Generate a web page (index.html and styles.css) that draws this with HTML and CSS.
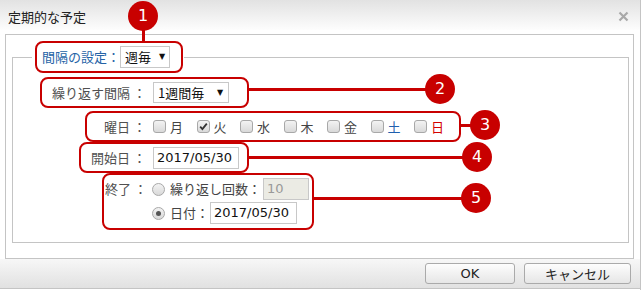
FILE: index.html
```html
<!DOCTYPE html>
<html lang="ja">

<head>
    <meta charset="UTF-8">
    <meta name="viewport" content="width=device-width, initial-scale=1.0">
    <title>定期的な予定</title>
    <link rel="stylesheet" href="styles.css">
</head>

<body>
    <div class="dialog">
        <div class="titlebar">
            <span class="title">定期的な予定</span>
            <span class="close">
                <svg width="11" height="11" viewBox="0 0 11 11">
                    <path d="M1.5 1.5 L9.5 9.5 M9.5 1.5 L1.5 9.5" stroke="#a8a8a8" stroke-width="2.2" fill="none"/>
                </svg>
            </span>
        </div>

        <div class="content">
            <div class="frame">
                <fieldset class="group">
                    <legend class="legend">
                        <div class="mark mark-type">
                            <span class="legend-text">間隔の設定：</span>
                            <span class="select select-type">週毎<i class="arrow">▼</i></span>
                        </div>
                    </legend>

                    <div class="mark mark-interval">
                        <span class="label label-interval">繰り返す間隔 ：</span>
                        <span class="select select-interval">1週間毎<i class="arrow">▼</i></span>
                    </div>

                    <div class="mark mark-days">
                        <span class="label label-days">曜日 ：</span>
                        <div class="days">
                            <span class="day"><span class="check"></span>月</span>
                            <span class="day"><span class="check checked"><svg width="11" height="11" viewBox="0 0 11 11"><path d="M2.2 5.6 L4.4 8 L8.8 2.6" stroke="#333" stroke-width="1.8" fill="none"/></svg></span>火</span>
                            <span class="day"><span class="check"></span>水</span>
                            <span class="day"><span class="check"></span>木</span>
                            <span class="day"><span class="check"></span>金</span>
                            <span class="day day-sat"><span class="check"></span>土</span>
                            <span class="day day-sun"><span class="check"></span>日</span>
                        </div>
                    </div>

                    <div class="mark mark-start">
                        <span class="label label-start">開始日 ：</span>
                        <span class="field field-start">2017/05/30</span>
                    </div>

                    <div class="mark mark-end">
                        <span class="label label-end">終了 ：</span>
                        <div class="options">
                            <div class="option">
                                <span class="radio"></span>
                                <span class="option-text">繰り返し回数：</span>
                                <span class="field field-count">10</span>
                            </div>
                            <div class="option">
                                <span class="radio checked"></span>
                                <span class="option-text">日付：</span>
                                <span class="field field-date">2017/05/30</span>
                            </div>
                        </div>
                    </div>
                </fieldset>
            </div>
        </div>

        <div class="footer">
            <button class="btn btn-ok">OK</button>
            <button class="btn btn-cancel">キャンセル</button>
        </div>

        <!-- 注釈 -->
        <div class="lead lead-1"></div>
        <div class="lead lead-2"></div>
        <div class="lead lead-3"></div>
        <div class="lead lead-4"></div>
        <div class="lead lead-5"></div>
        <div class="badge badge-1">1</div>
        <div class="badge badge-2">2</div>
        <div class="badge badge-3">3</div>
        <div class="badge badge-4">4</div>
        <div class="badge badge-5">5</div>
    </div>
</body>

</html>
```

FILE: styles.css
```css
* {
    margin: 0;
    padding: 0;
    box-sizing: border-box;
}

body {
    width: 641px;
    height: 290px;
    overflow: hidden;
    background: #fff;
    font-family: "DejaVu Sans", "Noto Sans CJK JP", sans-serif;
    font-size: 13px;
    line-height: 18px;
    color: #222;
}

.dialog {
    position: relative;
    width: 641px;
    height: 290px;
    border-right: 1px solid #c4c4c4;
    background: #fff;
}

/* タイトル */
.titlebar {
    height: 30px;
    display: flex;
    align-items: center;
    justify-content: space-between;
    padding: 3px 11px 0 8px;
    background: linear-gradient(#e2e2e2, #fdfdfd);
}

.title {
    font-family: "Noto Sans CJK JP", sans-serif;
    color: #222;
}

.close {
    display: flex;
    width: 11px;
    height: 11px;
}

/* 本体 */
.content {
    padding: 4px 6px 0 5px;
}

.frame {
    height: 225px;
    border: 1px solid #c4c4c4;
    padding: 6px 4px 0 6px;
}

.group {
    border: 1px solid #c4c4c4;
    padding: 4px 0 12px 0;
    min-width: 0;
}

.legend {
    margin-left: 19px;
    padding: 0 1px 0 3px;
}

.mark {
    display: flex;
    align-items: center;
    width: fit-content;
    height: 31px;
    border: 2px solid #c80000;
    border-radius: 8px;
}

.mark-type {
    height: 32px;
    padding: 0 11px 0 5px;
}

.legend-text {
    font-family: "Noto Sans CJK JP", sans-serif;
    color: #2563a6;
}

.label {
    font-family: "Noto Sans CJK JP", sans-serif;
    color: #505050;
    text-align: right;
    padding-right: 7px;
    white-space: pre;
}

.select {
    position: relative;
    display: flex;
    align-items: center;
    height: 21px;
    border: 1px solid #c8c8c8;
    background: #fff;
    color: #111;
    padding-left: 4px;
    font-family: "Noto Sans CJK JP", sans-serif;
}

.arrow {
    position: absolute;
    font-style: normal;
    font-size: 8px;
    line-height: 8px;
    font-family: "DejaVu Sans", sans-serif;
    top: 6px;
}

.select-type {
    width: 50px;
    height: 22px;
}

.select-type .arrow {
    left: 38px;
}

.select-interval {
    width: 76px;
}

.select-interval .arrow {
    left: 63px;
}

.field {
    display: flex;
    align-items: center;
    height: 22px;
    border: 1px solid #c8c8c8;
    background: #fff;
    padding-left: 3px;
    color: #111;
}

/* 行 */
.mark-interval {
    margin-left: 27px;
    margin-bottom: 3px;
    padding-right: 18px;
}

.label-interval {
    width: 111px;
}

.mark-days {
    margin-left: 72px;
    padding-right: 15px;
}

.label-days {
    width: 66px;
}

.days {
    display: flex;
    gap: 13.5px;
}

.day {
    display: flex;
    align-items: center;
    font-family: "Noto Sans CJK JP", sans-serif;
    color: #444;
}

.day-sat {
    color: #1f5fae;
}

.day-sun {
    color: #d40000;
}

.check {
    display: flex;
    align-items: center;
    justify-content: center;
    width: 13px;
    height: 13px;
    margin-right: 4px;
    border: 1px solid #a8a8a8;
    border-radius: 3px;
    background: linear-gradient(#f3f3f3, #d9d9d9);
}

.mark-start {
    margin-left: 66px;
    padding-right: 8px;
}

.label-start {
    width: 72px;
}

.field-start {
    width: 86px;
}

.mark-end {
    margin-left: 89px;
    height: 57px;
    align-items: flex-start;
    padding: 3px 3px 4px 0;
}

.label-end {
    width: 48px;
    height: 22px;
    line-height: 22px;
    padding-right: 5px;
}

.options {
    display: flex;
    flex-direction: column;
    gap: 2px;
}

.option {
    display: flex;
    align-items: center;
    height: 22px;
}

.option-text {
    font-family: "Noto Sans CJK JP", sans-serif;
    color: #444;
    margin-left: 5px;
}

.radio {
    position: relative;
    width: 13px;
    height: 13px;
    border: 1px solid #a8a8a8;
    border-radius: 50%;
    background: linear-gradient(#f3f3f3, #d9d9d9);
}

.radio.checked::after {
    content: "";
    position: absolute;
    left: 3px;
    top: 3px;
    width: 5px;
    height: 5px;
    border-radius: 50%;
    background: #555;
}

.field-count {
    width: 46px;
    margin-left: 2px;
    background: #ebebe4;
    color: #999;
}

.field-date {
    width: 87px;
    margin-left: 1px;
}

/* フッター */
.footer {
    display: flex;
    justify-content: flex-end;
    gap: 9px;
    height: 30px;
    padding: 4px 9px 0 0;
    background: linear-gradient(#f7f7f7, #e1e1e1);
    border-bottom: 1px solid #c4c4c4;
}

.btn {
    height: 21px;
    border: 1px solid #aaa;
    border-radius: 3px;
    background: linear-gradient(#fdfdfd, #e6e6e6);
    font-family: "DejaVu Sans", "Noto Sans CJK JP", sans-serif;
    font-size: 13px;
    color: #222;
}

.btn-ok {
    width: 90px;
}

.btn-cancel {
    width: 107px;
    font-family: "Noto Sans CJK JP", sans-serif;
}

/* 注釈 */
.lead {
    position: absolute;
    background: #c80000;
    height: 3px;
}

.lead-1 {
    left: 142px;
    top: 28px;
    width: 3px;
    height: 14px;
}

.lead-2 {
    left: 248px;
    top: 88px;
    width: 180px;
}

.lead-3 {
    left: 460px;
    top: 124px;
    width: 15px;
}

.lead-4 {
    left: 249px;
    top: 156px;
    width: 220px;
}

.lead-5 {
    left: 313px;
    top: 197px;
    width: 155px;
}

.badge {
    position: absolute;
    width: 30px;
    height: 30px;
    border-radius: 50%;
    background: #c80000;
    color: #fff;
    font-family: "DejaVu Sans", sans-serif;
    font-size: 16px;
    line-height: 30px;
    text-align: center;
}

.badge-1 {
    left: 128px;
    top: 1px;
}

.badge-2 {
    left: 425px;
    top: 74px;
}

.badge-3 {
    left: 470px;
    top: 110px;
}

.badge-4 {
    left: 462px;
    top: 142px;
}

.badge-5 {
    left: 461px;
    top: 183px;
}
```
